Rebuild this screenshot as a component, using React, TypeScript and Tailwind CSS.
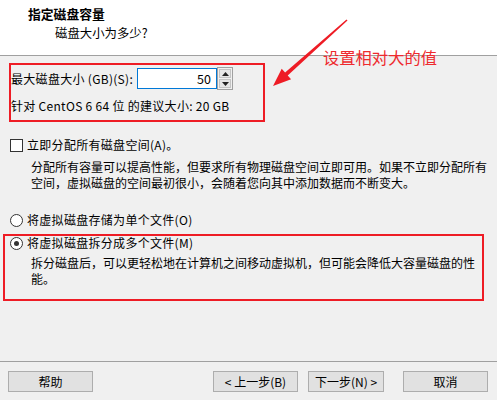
import React from "react";

function Btn({ label, className = "" }: { label: string; className?: string }) {
  return (
    <div
      className={`h-[21px] flex items-center justify-center border border-[#adadad] bg-[#e1e1e1] text-black ${className}`}
    >
      {label}
    </div>
  );
}

function Radio({ checked }: { checked?: boolean }) {
  return (
    <div className="w-[13px] h-[13px] rounded-full border border-[#333] bg-white flex items-center justify-center shrink-0">
      {checked && <div className="w-[5px] h-[5px] rounded-full bg-[#333]" />}
    </div>
  );
}

export default function App() {
  return (
    <div className="relative w-[497px] h-[400px] bg-[#f0f0f0] flex flex-col font-['Noto_Sans_CJK_SC',sans-serif] text-[12px] leading-4 text-black overflow-hidden">
      {/* header */}
      <div className="h-[56px] bg-white border-b border-[#a0a0a0] shrink-0">
        <div className="pl-[28px] pt-[6px] font-bold text-[12.8px]">指定磁盘容量</div>
        <div className="pl-[55px] mt-[3px] text-[12.4px]">磁盘大小为多少?</div>
      </div>

      {/* size */}
      <div className="mt-[11px] pl-[11px] h-[23px] flex items-center">
        <div className="w-[126px] whitespace-nowrap tracking-[0.3px]">最大磁盘大小 (GB)(S):</div>
        <div className="w-[80px] h-[21px] border border-[#0078d7] bg-white flex items-center justify-end pr-[5px] text-[12.5px]">
          50
        </div>
        <div className="w-[16px] h-[23px] border border-[#a0a0a0] flex flex-col p-[1px] gap-[1px]">
          <div className="flex-1 bg-[#e6e6e6] border border-[#c4c4c4] flex items-center justify-center">
            <svg width="7" height="4" viewBox="0 0 7 4">
              <polygon points="3.5,0 7,4 0,4" fill="#222" />
            </svg>
          </div>
          <div className="flex-1 bg-[#e6e6e6] border border-[#c4c4c4] flex items-center justify-center">
            <svg width="7" height="4" viewBox="0 0 7 4">
              <polygon points="0,0 7,0 3.5,4" fill="#222" />
            </svg>
          </div>
        </div>
      </div>
      <div className="mt-[8px] pl-[11px] whitespace-nowrap tracking-[0.3px]">
        针对 CentOS 6 64 位 的建议大小: 20 GB
      </div>

      {/* allocate */}
      <div className="mt-[23px] pl-[10px] h-4 flex items-center gap-[4px]">
        <div className="w-[13px] h-[13px] border border-[#333] bg-white shrink-0" />
        <span className="tracking-[0.3px]">立即分配所有磁盘空间(A)。</span>
      </div>
      <div className="mt-[6px] pl-[31px] whitespace-nowrap">
        分配所有容量可以提高性能，但要求所有物理磁盘空间立即可用。如果不立即分配所有
        <br />
        空间，虚拟磁盘的空间最初很小，会随着您向其中添加数据而不断变大。
      </div>

      {/* storage */}
      <div className="mt-[21px] pl-[10px] h-4 flex items-center gap-[4px]">
        <Radio />
        <span className="tracking-[0.3px]">将虚拟磁盘存储为单个文件(O)</span>
      </div>
      <div className="mt-[7px] pl-[10px] h-4 flex items-center gap-[4px]">
        <Radio checked />
        <span className="tracking-[0.3px]">将虚拟磁盘拆分成多个文件(M)</span>
      </div>
      <div className="mt-[4px] pl-[31px] whitespace-nowrap">
        拆分磁盘后，可以更轻松地在计算机之间移动虚拟机，但可能会降低大容量磁盘的性
        <br />
        能。
      </div>

      <div className="flex-1" />

      {/* footer */}
      <div className="border-t border-[#a0a0a0] pt-[9px] pb-[8px] pl-[8px] flex items-center shrink-0">
        <Btn label="帮助" className="w-[85px]" />
        <Btn label="< 上一步(B)" className="w-[85px] ml-[120px]" />
        <Btn label="下一步(N) >" className="w-[76px] ml-[10px]" />
        <Btn label="取消" className="w-[85px] ml-[19px]" />
      </div>

      {/* annotations */}
      <div className="absolute left-[9px] top-[63px] w-[256px] h-[59px] border-2 border-[#ee1c25]" />
      <div className="absolute left-[3px] top-[234px] w-[481px] h-[67px] border-2 border-[#ee1c25]" />
      <div className="absolute left-[323px] top-[47px] text-[16.3px] leading-5 text-[#ee2a2e] whitespace-nowrap">
        设置相对大的值
      </div>
      <svg className="absolute left-0 top-0 pointer-events-none" width="497" height="400" viewBox="0 0 497 400">
        <polygon
          points="273,86 281.7,68.8 285.1,72.5 346.5,19.4 347.5,20.6 287.7,75.5 291.1,79.2"
          fill="#ee1c25"
        />
      </svg>
    </div>
  );
}
